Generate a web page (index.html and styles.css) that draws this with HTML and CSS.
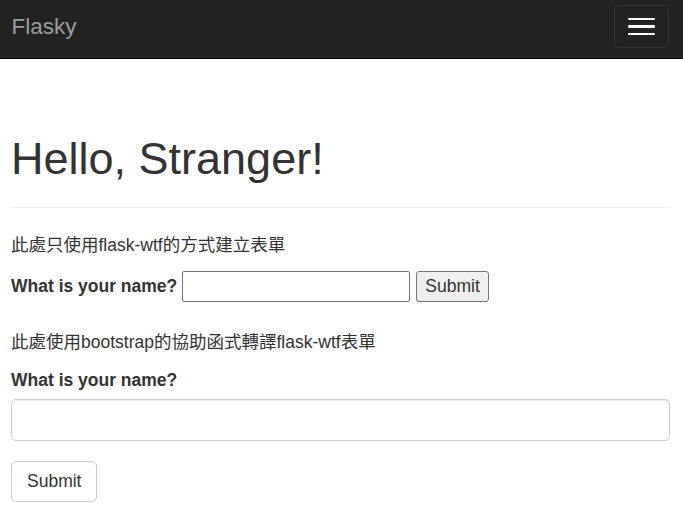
FILE: index.html
```html
<!DOCTYPE html>
<html lang="zh-Hant">
<head>
<meta charset="utf-8">
<title>Flasky</title>
<link rel="stylesheet" href="styles.css">
</head>
<body>
<nav class="navbar">
  <a class="brand" href="#">Flasky</a>
  <button class="toggle" type="button" aria-label="Toggle navigation">
    <span class="bar"></span>
    <span class="bar"></span>
    <span class="bar"></span>
  </button>
</nav>
<main class="container">
  <div class="page-header">
    <h1>Hello, Stranger!</h1>
  </div>
  <p class="note">此處只使用flask-wtf的方式建立表單</p>
  <form class="inline-form">
    <label class="lbl" for="name1">What is your name?</label>
    <input class="plain-input" id="name1" type="text">
    <button class="plain-btn" type="button">Submit</button>
  </form>
  <p class="note">此處使用bootstrap的協助函式轉譯flask-wtf表單</p>
  <form class="bs-form">
    <div class="form-group">
      <label class="lbl block" for="name2">What is your name?</label>
      <input class="form-control" id="name2" type="text">
    </div>
    <button class="btn-default" type="button">Submit</button>
  </form>
</main>
</body>
</html>
```

FILE: styles.css
```css
* { box-sizing: border-box; }

html, body {
  margin: 0;
  padding: 0;
  background: #fff;
}

body {
  font-family: "Liberation Sans", Arial, "Noto Sans CJK TC", sans-serif;
  font-size: 17.5px;
  line-height: 25px;
  color: #333;
}

.navbar {
  height: 59px;
  background: #222;
  border-bottom: 1px solid #080808;
  display: flex;
  justify-content: space-between;
  align-items: flex-start;
}

.brand {
  display: block;
  padding: 13.5px 0 0 11.5px;
  font-size: 22.5px;
  line-height: 25px;
  color: #9d9d9d;
  text-decoration: none;
}

.toggle {
  margin: 5px 14px 0 0;
  width: 55px;
  height: 43px;
  padding: 0;
  background: transparent;
  border: 1px solid #333;
  border-radius: 5px;
  display: flex;
  flex-direction: column;
  align-items: center;
  justify-content: center;
  gap: 5px;
}

.bar {
  display: block;
  width: 27.5px;
  height: 2.5px;
  background: #fff;
  border-radius: 1px;
}

.container {
  padding: 0 13px 0 11px;
}

.page-header {
  margin-top: 75px;
  padding-bottom: 23.5px;
  border-bottom: 1px solid #eee;
}

h1 {
  margin: 0;
  font-size: 45px;
  line-height: 49.5px;
  font-weight: 500;
  color: #333;
}

.note {
  margin: 0 0 12.5px;
}

.page-header + .note {
  margin-top: 25px;
}

.inline-form {
  display: flex;
  align-items: center;
  height: 31px;
  margin-bottom: 28.5px;
}

.lbl {
  font-weight: 700;
}

.lbl.block {
  display: block;
  margin-bottom: 6.25px;
}

.plain-input {
  margin: 0 0 0 5px;
  width: 228px;
  height: 31px;
  border: 1px solid #767676;
  border-radius: 2px;
  background: #fff;
  padding: 1px 2px;
}

.plain-btn {
  margin: 0 0 0 6px;
  height: 31px;
  padding: 0 8px;
  font-family: inherit;
  font-size: 17.5px;
  color: #333;
  background: #efefef;
  border: 1px solid #767676;
  border-radius: 3px;
}

.bs-form {
  margin: 0;
}

.form-group {
  margin-bottom: 19.5px;
}

.form-control {
  display: block;
  width: 100%;
  height: 42.5px;
  padding: 7.5px 15px;
  font-family: inherit;
  font-size: 17.5px;
  color: #555;
  background: #fff;
  border: 1px solid #ccc;
  border-radius: 5px;
  box-shadow: inset 0 1px 1px rgba(0, 0, 0, 0.075);
}

.btn-default {
  display: inline-block;
  height: 41.5px;
  padding: 7px 15px;
  font-family: inherit;
  font-size: 17.5px;
  line-height: 25px;
  color: #333;
  background: #fff;
  border: 1px solid #ccc;
  border-radius: 5px;
}
```
